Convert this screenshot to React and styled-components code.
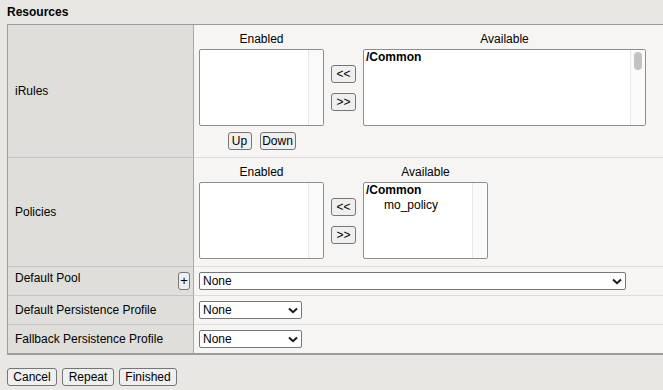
import React from "react";
import styled, { createGlobalStyle } from "styled-components";

const Global = createGlobalStyle`
  html, body { margin: 0; padding: 0; background: #e8e7e3; overflow: hidden; }
  body { font-family: "Liberation Sans", Arial, sans-serif; font-size: 12px; color: #000; }
`;

const Page = styled.div`
  width: 663px;
  height: 390px;
  overflow: hidden;
  box-sizing: border-box;
  padding: 5px 0 0 7px;
  background: #e8e7e3;
`;

const Heading = styled.div`
  font-weight: bold;
  line-height: 14px;
  height: 14px;
  margin-bottom: 5px;
`;

const Table = styled.div`
  display: grid;
  grid-template-columns: 186px 1fr;
  grid-template-rows: 132px 109px 29px 29px 29px;
  width: 700px;
  border-top: 1px solid #9c9c9c;
  border-left: 1px solid #9c9c9c;
  border-bottom: 2px solid #9c9c9c;
`;

const LabelCell = styled.div`
  box-sizing: border-box;
  background: #dfdedb;
  border-right: 1px solid #a8a8a8;
  border-top: ${(p) => (p.$first ? "none" : "1px solid #c4c4c4")};
  display: flex;
  justify-content: space-between;
  align-items: ${(p) => (p.$top ? "flex-start" : "center")};
  padding: ${(p) => (p.$top ? "4px 3px 0 7px" : "0 3px 0 7px")};
  line-height: 14px;
`;

const ValueCell = styled.div`
  box-sizing: border-box;
  background: #f6f5f3;
  border-top: ${(p) => (p.$first ? "none" : "1px solid #dcdcdc")};
  padding: ${(p) => (p.$tall ? "7px 0 0 5px" : "5px 0 0 5px")};
  display: flex;
  align-items: flex-start;
`;

const ListGroup = styled.div`
  display: flex;
  align-items: flex-start;
  gap: 7px;
`;

const Column = styled.div`
  display: flex;
  flex-direction: column;
  align-items: center;
`;

const Caption = styled.div`
  line-height: 14px;
  height: 14px;
  margin-bottom: 3px;
  text-align: center;
`;

const ListBox = styled.div`
  box-sizing: border-box;
  width: ${(p) => p.$w}px;
  height: 77px;
  background: #fff;
  border: 1px solid #8e8e8e;
  border-radius: 2px;
  display: flex;
  overflow: hidden;
`;

const Items = styled.div`
  flex: 1;
  padding-left: 2px;
  line-height: 15px;
`;

const Item = styled.div`
  font-weight: ${(p) => (p.$group ? "bold" : "normal")};
  padding-left: ${(p) => (p.$group ? 0 : 18)}px;
  white-space: nowrap;
`;

const Track = styled.div`
  width: 14px;
  border-left: 1px solid #e6e6e6;
  background: #fafafa;
  display: flex;
  justify-content: center;
`;

const Thumb = styled.div`
  margin-top: 2px;
  width: 8px;
  height: 18px;
  border-radius: 4px;
  background: #c2c2c2;
`;

const MoveColumn = styled.div`
  margin-top: 17px;
  height: 77px;
  display: flex;
  flex-direction: column;
  justify-content: center;
  gap: 10px;
`;

const OrderRow = styled.div`
  display: flex;
  gap: 8px;
  margin-top: 6px;
`;

const Btn = styled.button`
  box-sizing: border-box;
  height: 18px;
  width: ${(p) => (p.$w ? `${p.$w}px` : "auto")};
  padding: 0;
  font: 12px "Liberation Sans", Arial, sans-serif;
  line-height: 16px;
  color: #000;
  background: #efefef;
  border: 1px solid #767676;
  border-radius: 3px;
  text-align: center;
  cursor: default;
`;

const PlusBtn = styled(Btn)`
  margin-top: 1px;
  width: 12px;
  font-size: 13px;
`;

const Select = styled.div`
  box-sizing: border-box;
  width: ${(p) => p.$w}px;
  height: 18px;
  background: #fff;
  border: 1px solid #767676;
  border-radius: 2px;
  display: flex;
  align-items: center;
  justify-content: space-between;
  padding: 0 3px 0 3px;
  line-height: 16px;
`;

const Actions = styled.div`
  display: flex;
  gap: 5px;
  margin-top: 13px;
`;

const Chevron = () => (
  <svg width="10" height="7" viewBox="0 0 10 7">
    <path d="M1 1.5 L5 5.2 L9 1.5" fill="none" stroke="#1a1a1a" strokeWidth="2" />
  </svg>
);

const Dropdown = ({ w }) => (
  <Select $w={w}>
    <span>None</span>
    <Chevron />
  </Select>
);

const Transfer = ({ availableWidth, available, thumb, order }) => (
  <ListGroup>
    <Column>
      <Caption>Enabled</Caption>
      <ListBox $w={125}>
        <Items />
        <Track />
      </ListBox>
      {order && (
        <OrderRow>
          <Btn $w={24}>Up</Btn>
          <Btn $w={36}>Down</Btn>
        </OrderRow>
      )}
    </Column>
    <MoveColumn>
      <Btn $w={25}>&lt;&lt;</Btn>
      <Btn $w={25}>&gt;&gt;</Btn>
    </MoveColumn>
    <Column>
      <Caption>Available</Caption>
      <ListBox $w={availableWidth}>
        <Items>
          {available.map((it) => (
            <Item key={it.name} $group={it.group}>
              {it.name}
            </Item>
          ))}
        </Items>
        <Track>{thumb && <Thumb />}</Track>
      </ListBox>
    </Column>
  </ListGroup>
);

export default function App() {
  return (
    <>
      <Global />
      <Page>
        <Heading>Resources</Heading>
        <Table>
          <LabelCell $first>iRules</LabelCell>
          <ValueCell $first $tall>
            <Transfer
              availableWidth={283}
              available={[{ name: "/Common", group: true }]}
              thumb
              order
            />
          </ValueCell>

          <LabelCell>Policies</LabelCell>
          <ValueCell $tall>
            <Transfer
              availableWidth={125}
              available={[
                { name: "/Common", group: true },
                { name: "mo_policy" },
              ]}
            />
          </ValueCell>

          <LabelCell $top>
            <span>Default Pool</span>
            <PlusBtn>+</PlusBtn>
          </LabelCell>
          <ValueCell>
            <Dropdown w={427} />
          </ValueCell>

          <LabelCell>Default Persistence Profile</LabelCell>
          <ValueCell>
            <Dropdown w={103} />
          </ValueCell>

          <LabelCell>Fallback Persistence Profile</LabelCell>
          <ValueCell>
            <Dropdown w={103} />
          </ValueCell>
        </Table>
        <Actions>
          <Btn $w={50}>Cancel</Btn>
          <Btn $w={52}>Repeat</Btn>
          <Btn $w={58}>Finished</Btn>
        </Actions>
      </Page>
    </>
  );
}
